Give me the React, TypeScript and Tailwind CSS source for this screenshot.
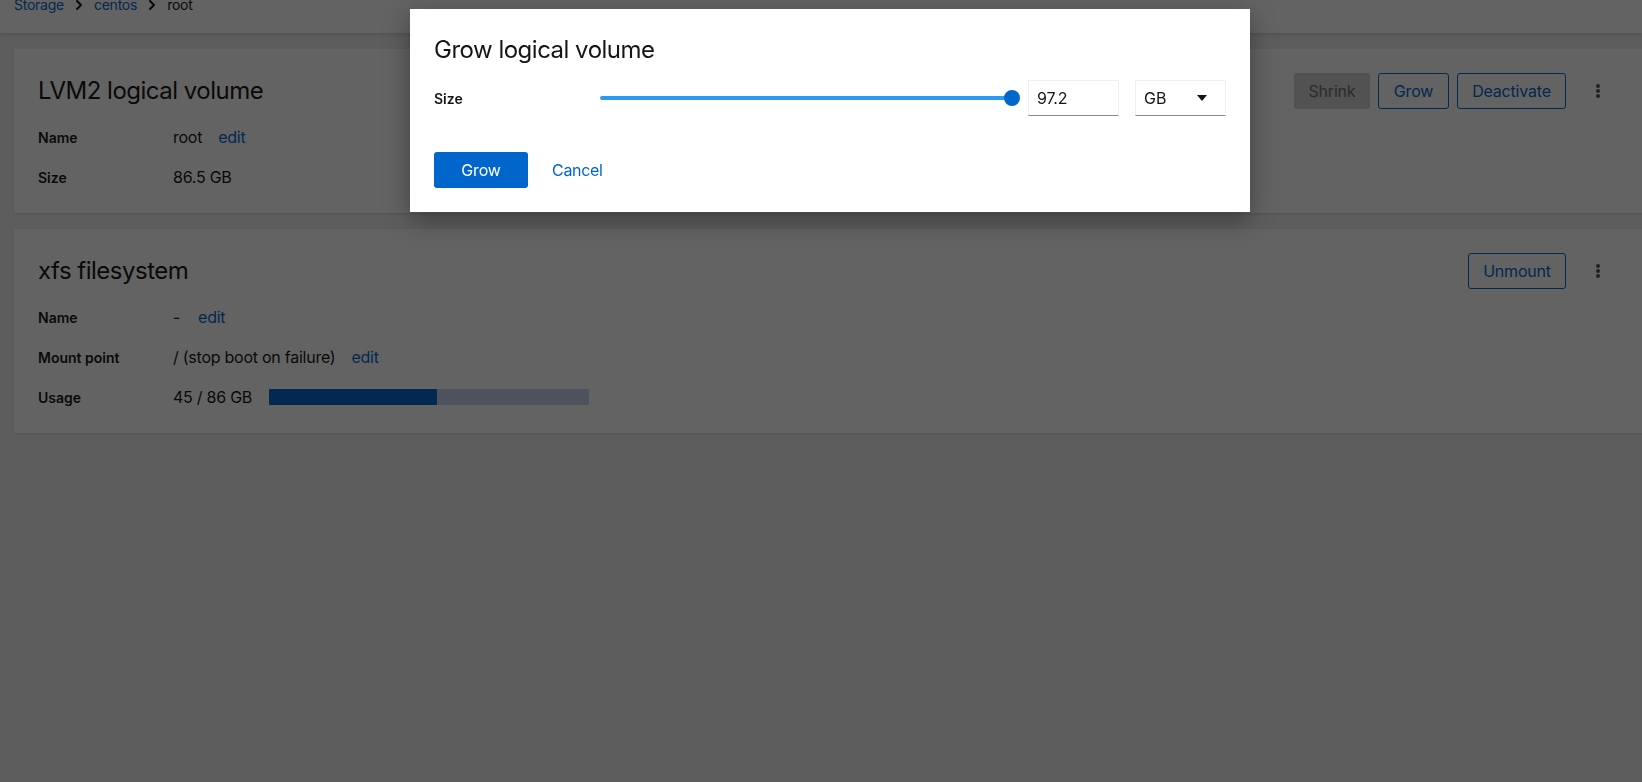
import React from "react";

const FONT = "font-['Inter','Liberation_Sans',sans-serif]";

function Kebab() {
  return (
    <div className="w-[48px] h-9 flex items-center justify-center">
      <svg width="4" height="14" viewBox="0 0 4 14" fill="#4f5255">
        <circle cx="2" cy="2" r="2" />
        <circle cx="2" cy="7" r="2" />
        <circle cx="2" cy="12" r="2" />
      </svg>
    </div>
  );
}

function Chevron() {
  return (
    <svg width="6" height="10" viewBox="0 0 6 10" className="mx-[12px]">
      <polyline points="1,1 5,5 1,9" fill="none" stroke="#151515" strokeWidth="2" strokeLinejoin="round" strokeLinecap="round" />
    </svg>
  );
}

function Row({ label, children }: { label: string; children: React.ReactNode }) {
  return (
    <div className="flex items-center h-6">
      <div className="w-[135px] text-[14px] font-semibold text-[#151515]">{label}</div>
      <div className="flex items-center text-[16px] tracking-[-0.25px] text-[#151515]">{children}</div>
    </div>
  );
}

function OutlineBtn({ children, w }: { children: React.ReactNode; w: string }) {
  return (
    <button className={`${w} h-9 rounded-[3px] border border-[#0066cc] bg-white text-[16px] tracking-[-0.2px] text-[#0066cc] flex items-center justify-center`}>
      {children}
    </button>
  );
}

export default function App() {
  return (
    <div className={`${FONT} relative min-h-screen bg-[#f0f0f0] overflow-hidden`}>
      {/* header */}
      <div className="h-[33px] bg-white shadow-[0_2px_4px_rgba(0,0,0,0.12)] relative z-10 flex items-start overflow-hidden">
        <div className="flex items-center px-[14px] -translate-y-[6px] h-[21px] text-[14px] tracking-[-0.25px]">
          <span className="text-[#0066cc]">Storage</span>
          <Chevron />
          <span className="text-[#0066cc]">centos</span>
          <Chevron />
          <span className="text-[#151515]">root</span>
        </div>
      </div>

      <div className="flex flex-col gap-4 pt-4 pl-[14px]">
        {/* card 1 */}
        <div className="bg-white shadow-[0_1px_2px_rgba(0,0,0,0.12)] pt-6 pb-6 pl-6 pr-5">
          <div className="flex items-center justify-between h-9">
            <h2 className="text-[24px] tracking-[-0.5px] text-[#151515] leading-[30px]">LVM2 logical volume</h2>
            <div className="flex items-center gap-2">
              <button className="w-[76px] h-9 rounded-[3px] bg-[#d2d2d2] text-[16px] tracking-[-0.2px] text-[#6a6e73]">Shrink</button>
              <OutlineBtn w="w-[71px]">Grow</OutlineBtn>
              <OutlineBtn w="w-[109px]">Deactivate</OutlineBtn>
              <Kebab />
            </div>
          </div>
          <div className="flex flex-col gap-4 mt-4">
            <Row label="Name">
              <span>root</span>
              <span className="ml-4 text-[#0066cc]">edit</span>
            </Row>
            <Row label="Size">
              <span>86.5 GB</span>
            </Row>
          </div>
        </div>

        {/* card 2 */}
        <div className="bg-white shadow-[0_1px_2px_rgba(0,0,0,0.12)] pt-6 pb-6 pl-6 pr-5">
          <div className="flex items-center justify-between h-9">
            <h2 className="text-[24px] tracking-[-0.5px] text-[#151515] leading-[30px]">xfs filesystem</h2>
            <div className="flex items-center gap-2">
              <OutlineBtn w="w-[98px]">Unmount</OutlineBtn>
              <Kebab />
            </div>
          </div>
          <div className="flex flex-col gap-4 mt-4">
            <Row label="Name">
              <span>-</span>
              <span className="ml-[18px] text-[#0066cc]">edit</span>
            </Row>
            <Row label="Mount point">
              <span>/ (stop boot on failure)</span>
              <span className="ml-4 text-[#0066cc]">edit</span>
            </Row>
            <Row label="Usage">
              <span>45 / 86 GB</span>
              <div className="ml-[17px] w-[320px] h-4 bg-[#c5d4f0] flex">
                <div className="h-4 bg-[#0066cc]" style={{ width: `${(45 / 86) * 100}%` }} />
              </div>
            </Row>
          </div>
        </div>
      </div>

      {/* backdrop */}
      <div className="fixed inset-0 bg-[rgba(3,3,3,0.62)] z-20" />

      {/* modal */}
      <div className="fixed left-[410px] top-[9px] w-[840px] bg-white z-30 shadow-[0_8px_24px_rgba(0,0,0,0.35)] px-6 pt-[26px] pb-6">
        <h1 className="text-[24px] tracking-[-0.5px] leading-[30px] text-[#151515]">Grow logical volume</h1>
        <div className="flex items-center mt-[15px] h-9">
          <div className="w-[166px] text-[14px] font-semibold text-[#151515]">Size</div>
          <div className="relative flex-1 h-4">
            <div className="absolute left-0 right-2 top-[6px] h-1 rounded-full bg-[#2b9af3]" />
            <div className="absolute right-0 top-0 w-4 h-4 rounded-full bg-[#0066cc]" />
          </div>
          <div className="ml-2 w-[91px] h-9 border border-[#f0f0f0] border-b-[#8a8d90] flex items-center px-2 text-[16px] tracking-[-0.2px] text-[#151515]">
            97.2
          </div>
          <div className="ml-4 w-[91px] h-9 border border-[#f0f0f0] border-b-[#8a8d90] flex items-center justify-between pl-2 pr-[18px] text-[16px] text-[#151515]">
            <span>GB</span>
            <svg width="10" height="6" viewBox="0 0 10 6">
              <polygon points="0,0 10,0 5,6" fill="#151515" />
            </svg>
          </div>
        </div>
        <div className="flex items-center mt-9 gap-2">
          <button className="w-[94px] h-9 rounded-[3px] bg-[#0066cc] text-white text-[16px] tracking-[-0.2px]">Grow</button>
          <button className="h-9 px-4 text-[16px] tracking-[-0.3px] text-[#0066cc]">Cancel</button>
        </div>
      </div>
    </div>
  );
}
